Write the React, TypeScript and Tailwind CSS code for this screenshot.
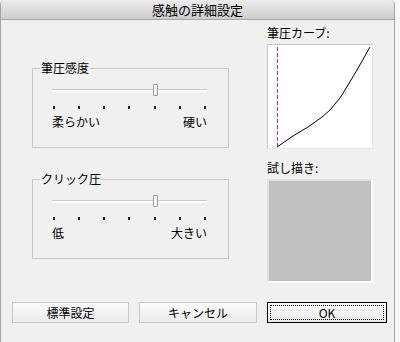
import React from "react";

const font = { fontFamily: '"Noto Sans CJK JP", "Noto Sans", sans-serif' };

function Slider({ leftLabel, rightLabel }: { leftLabel: string; rightLabel: string }) {
  return (
    <div className="pl-[19px] pr-[21px] pt-[15px]">
      <div className="relative h-[12px]">
        <div className="absolute left-0 right-0 top-[5px] h-[3px] border-t border-[#c9c9c9] bg-white border-b border-b-[#ffffff]" />
        <div className="absolute left-[101px] top-0 h-[12px] w-[5px] rounded-[1px] border border-[#9e9e9e] bg-[#f4f4f4]" />
      </div>
      <div className="mt-[10px] flex justify-between px-[1px]">
        {[0, 1, 2, 3, 4, 5, 6].map((i) => (
          <div key={i} className="h-[3px] w-[2px] bg-[#222]" />
        ))}
      </div>
      <div className="mt-[6px] flex justify-between text-[12px] leading-[14px] text-black">
        <span>{leftLabel}</span>
        <span>{rightLabel}</span>
      </div>
    </div>
  );
}

function Group({ title, left, right }: { title: string; left: string; right: string }) {
  return (
    <div className="relative h-[80px] w-[197px] border border-[#c8c8c8]">
      <span className="absolute left-[7px] top-[-8px] bg-[#f0f0f0] px-[1px] text-[12px] leading-[14px] text-black">
        {title}
      </span>
      <Slider leftLabel={left} rightLabel={right} />
    </div>
  );
}

export default function App() {
  return (
    <div className="h-[342px] w-[400px] overflow-hidden bg-[#f7f7f7]" style={font}>
      <div className="flex h-[342px] w-[395px] flex-col overflow-hidden rounded-t-[5px] border-x border-[#a3a3a3] bg-[#f0f0f0]">
        <div className="flex h-[20px] shrink-0 items-center justify-center border-b border-[#a6a6a6] bg-gradient-to-b from-[#ececec] to-[#cdcdcd] text-[13px] leading-[14px] text-black">
          感触の詳細設定
        </div>
        <div className="flex pl-[31px]">
          <div className="flex flex-col pt-[48px]">
            <Group title="筆圧感度" left="柔らかい" right="硬い" />
            <div className="h-[31px]" />
            <Group title="クリック圧" left="低" right="大きい" />
          </div>
          <div className="ml-[38px] flex w-[106px] flex-col pt-[6px]">
            <div className="text-[12px] leading-[14px] text-black">筆圧カーブ:</div>
            <div className="mt-[4px] h-[105px] w-[106px] border border-[#c4c4c4] border-r-[#e6e6e6] border-b-[#e6e6e6] bg-white">
              <svg width="104" height="103" viewBox="0 0 104 103" className="block">
                <line
                  x1="9.5"
                  y1="2"
                  x2="9.5"
                  y2="102"
                  stroke="#e0205f"
                  strokeWidth="1"
                  strokeDasharray="4 2"
                  shapeRendering="crispEdges"
                />
                <polyline
                  points="9,102 25,91 40,82 54,72 62,65 72,53 80,40 89,25 102,2"
                  fill="none"
                  stroke="#000"
                  strokeWidth="1"
                />
              </svg>
            </div>
            <div className="mt-[12px] text-[12px] leading-[14px] text-black">試し描き:</div>
            <div className="mt-[4px] h-[104px] w-[106px] border-2 border-[#e0e0e0] border-r-white border-b-white bg-[#c0c0c0]" />
          </div>
        </div>
        <div className="mt-[19px] flex gap-[10px] pl-[11px]">
          <button className="flex h-[21px] w-[117px] items-center justify-center border border-[#c6c6c6] bg-gradient-to-b from-[#fbfbfb] to-[#ebebeb] text-[12px] leading-[14px] text-black">
            標準設定
          </button>
          <button className="flex h-[21px] w-[118px] items-center justify-center border border-[#c6c6c6] bg-gradient-to-b from-[#fbfbfb] to-[#ebebeb] text-[12px] leading-[14px] text-black">
            キャンセル
          </button>
          <button className="flex h-[21px] w-[120px] items-center justify-center border border-black bg-gradient-to-b from-[#fbfbfb] to-[#ebebeb] p-[2px] text-[12px] leading-[14px] text-black">
            <span className="flex h-full w-full items-center justify-center border border-dotted border-black">
              OK
            </span>
          </button>
        </div>
      </div>
    </div>
  );
}
